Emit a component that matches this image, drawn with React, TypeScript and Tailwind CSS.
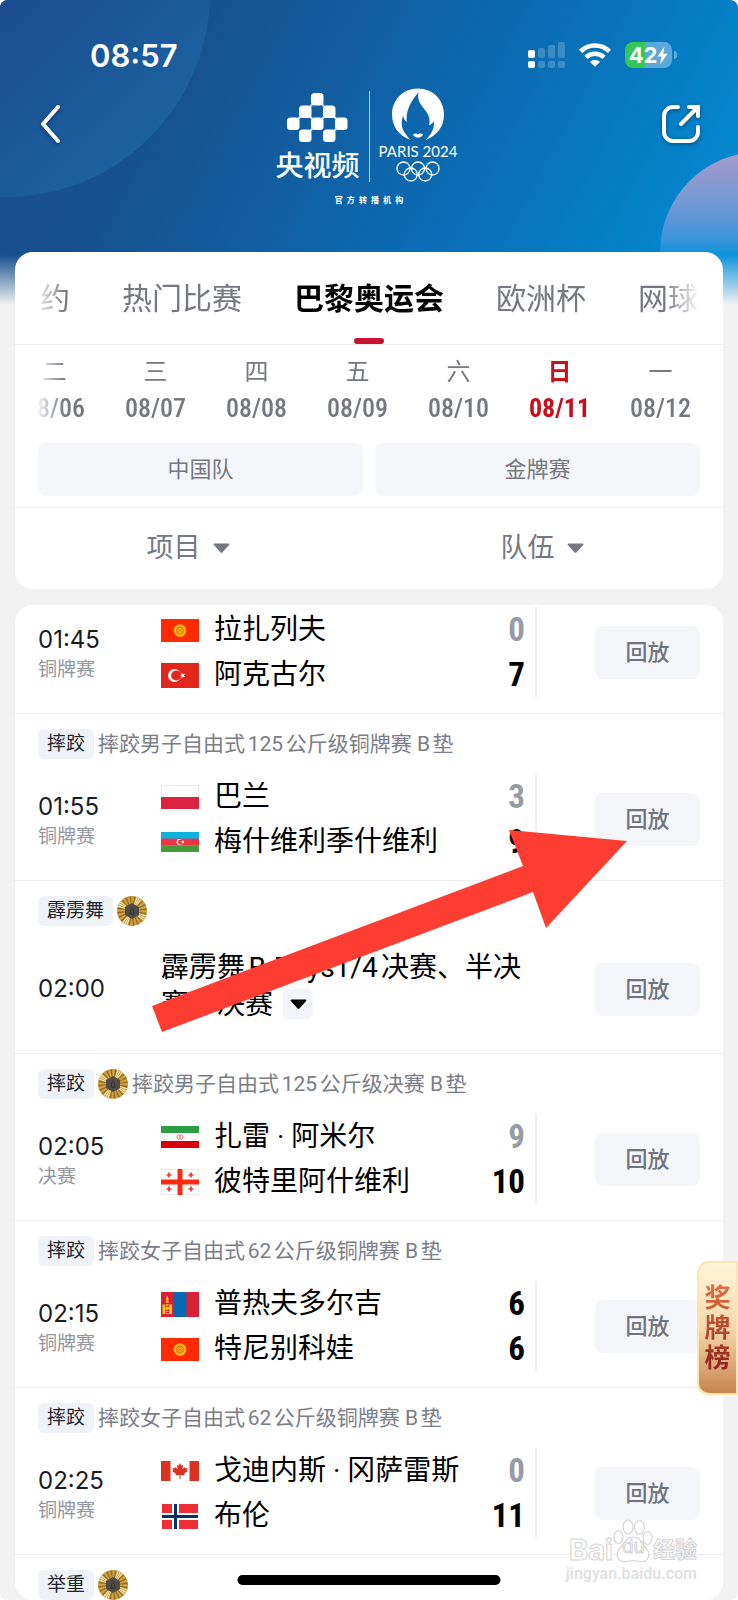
import { useState } from 'react'
import type { ReactNode } from 'react'

type Player = { flag: string; name: string; score: number; lost?: boolean }

type Match = {
  id: number
  sport?: string
  gold?: boolean
  title?: string
  time?: string
  stage?: string
  summary?: string
  players?: Player[]
}

const tabs = ['约', '热门比赛', '巴黎奥运会', '欧洲杯', '网球']

const days = [
  { week: '二', date: '08/06' },
  { week: '三', date: '08/07' },
  { week: '四', date: '08/08' },
  { week: '五', date: '08/09' },
  { week: '六', date: '08/10' },
  { week: '日', date: '08/11' },
  { week: '一', date: '08/12' },
]

const matches: Match[] = [
  {
    id: 1,
    time: '01:45',
    stage: '铜牌赛',
    players: [
      { flag: 'kg', name: '拉扎列夫', score: 0, lost: true },
      { flag: 'tr', name: '阿克古尔', score: 7 },
    ],
  },
  {
    id: 2,
    sport: '摔跤',
    title: '摔跤男子自由式125公斤级铜牌赛 B垫',
    time: '01:55',
    stage: '铜牌赛',
    players: [
      { flag: 'pl', name: '巴兰', score: 3, lost: true },
      { flag: 'az', name: '梅什维利季什维利', score: 9 },
    ],
  },
  {
    id: 3,
    sport: '霹雳舞',
    gold: true,
    time: '02:00',
    summary: '霹雳舞B-Boys1/4决赛、半决赛、决赛',
  },
  {
    id: 4,
    sport: '摔跤',
    gold: true,
    title: '摔跤男子自由式125公斤级决赛 B垫',
    time: '02:05',
    stage: '决赛',
    players: [
      { flag: 'ir', name: '扎雷 · 阿米尔', score: 9, lost: true },
      { flag: 'ge', name: '彼特里阿什维利', score: 10 },
    ],
  },
  {
    id: 5,
    sport: '摔跤',
    title: '摔跤女子自由式62公斤级铜牌赛 B垫',
    time: '02:15',
    stage: '铜牌赛',
    players: [
      { flag: 'mn', name: '普热夫多尔吉', score: 6 },
      { flag: 'kg', name: '特尼别科娃', score: 6 },
    ],
  },
  {
    id: 6,
    sport: '摔跤',
    title: '摔跤女子自由式62公斤级铜牌赛 B垫',
    time: '02:25',
    stage: '铜牌赛',
    players: [
      { flag: 'ca', name: '戈迪内斯 · 冈萨雷斯', score: 0, lost: true },
      { flag: 'no', name: '布伦', score: 11 },
    ],
  },
  { id: 7, sport: '举重', gold: true },
]

const georgiaCrosses = [
  [8, 6],
  [30, 6],
  [8, 20],
  [30, 20],
]

const flags: Record<string, { height: number; art: ReactNode }> = {
  kg: {
    height: 23,
    art: (
      <>
        <rect width="38" height="23" fill="#ff2a00" />
        <circle cx="19" cy="11.5" r="6.3" fill="#fdb813" />
        <circle cx="19" cy="11.5" r="3.4" fill="none" stroke="#e8620c" strokeWidth="1" />
        <path d="M16.5 9.5l5 4M16.5 13.5l5-4" stroke="#e8620c" strokeWidth=".8" />
      </>
    ),
  },
  tr: {
    height: 25,
    art: (
      <>
        <rect width="38" height="25" fill="#e1261c" />
        <circle cx="13.5" cy="12.5" r="6.5" fill="#fff" />
        <circle cx="15.2" cy="12.5" r="5.1" fill="#e1261c" />
        <path d="M18.6 12.5l2-.7V9.600l1.300 1.700 2.100-.6-1.200 1.800 1.200 1.800-2.100-.6-1.300 1.700v-2.200z" fill="#fff" />
      </>
    ),
  },
  pl: {
    height: 24,
    art: (
      <>
        <rect x=".5" y=".5" width="37" height="23" fill="#fff" stroke="#e9e9e9" />
        <path d="M0 12h38v12H0z" fill="#dc2440" />
      </>
    ),
  },
  az: {
    height: 20,
    art: (
      <>
        <rect width="38" height="7" fill="#0bb3df" />
        <rect y="6.6" width="38" height="7" fill="#ef3343" />
        <rect y="13.3" width="38" height="6.7" fill="#469a38" />
        <circle cx="18.5" cy="10" r="3" fill="#fff" />
        <circle cx="19.4" cy="10" r="2.4" fill="#ef3343" />
        <circle cx="21.8" cy="10" r="1.2" fill="#fff" />
      </>
    ),
  },
  ir: {
    height: 22,
    art: (
      <>
        <rect width="38" height="22" fill="#fdfdfd" />
        <rect width="38" height="7" fill="#2b9e44" />
        <rect y="15" width="38" height="7" fill="#d8000a" />
        <path d="M19 8.3v5.4M17.600 8.800c-2.200 1.200-1.900 3.600.3 4.600M20.400 8.800c2.200 1.200 1.900 3.600-.3 4.600" stroke="#e0464c" fill="none" />
      </>
    ),
  },
  ge: {
    height: 26,
    art: (
      <>
        <rect x=".5" y=".5" width="37" height="25" fill="#fff" stroke="#ececec" />
        <path d="M16.5 0h5v26h-5z M0 10.5h38v5H0z" fill="#ff2a10" />
        {georgiaCrosses.map(([x, y]) => (
          <path key={`${x}-${y}`} d={`M${x - 2.5} ${y}h5M${x} ${y - 2.5}v5`} stroke="#ef3a2c" strokeWidth="1.7" />
        ))}
      </>
    ),
  },
  mn: {
    height: 25,
    art: (
      <>
        <rect width="38" height="25" fill="#da2032" />
        <rect x="12.5" width="13" height="25" fill="#0968b5" />
        <path d="M1.5 12.5h2.8V22H1.5zM8.2 12.5H11V22H8.2zM5 12h2.5v1.4H5zM5 19h2.5v1H5zM5 21h2.5v1H5zM6.3 3.5l1 2.2c.8 1.4.3 2.3-1 2.3s-1.800-.9-1-2.300z" fill="#fbc718" />
        <circle cx="6.3" cy="9.6" r="1.5" fill="#fbc718" />
        <circle cx="6.3" cy="16.3" r="1.8" fill="#fbc718" />
      </>
    ),
  },
  ca: {
    height: 20,
    art: (
      <>
        <rect width="38" height="20" fill="#fff" />
        <path d="M0 0h9.500v20H0zM28.500 0H38v20h-9.500z" fill="#dc3224" />
        <path
          d="M19 2l1.500 2.800 1.700-.8-.8 4.200 2.200-2.200.5 1.300 2.400-.4-.8 2.400 1 .6-3.700 3.200.4 1.400-3.900-.6V18h-1v-4.100l-3.900.6.4-1.400-3.700-3.200 1-.6-.8-2.400 2.400.4.500-1.300 2.200 2.200-.8-4.200 1.700.8z"
          fill="#dc3224"
        />
      </>
    ),
  },
  no: {
    height: 25,
    art: (
      <>
        <rect x="1" width="36" height="25" fill="#ee2f35" />
        <path d="M11 0h7v25h-7zM1 9h36v7H1z" fill="#fff" />
        <path d="M13 0h3v25h-3zM1 11h36v3H1z" fill="#07306b" />
      </>
    ),
  },
}

function Flag({ code }: { code: string }) {
  const { height, art } = flags[code]
  return (
    <svg width="38" height={height} viewBox={`0 0 38 ${height}`} className="shrink-0" aria-hidden="true">
      {art}
    </svg>
  )
}

function GoldMedal() {
  const rays = Array.from({ length: 40 }, (_, i) => i)
  return (
    <svg width="30" height="30" viewBox="0 0 30 30" className="shrink-0" role="img" aria-label="金牌">
      <circle cx="15" cy="15" r="15" fill="#c1953b" />
      {rays.map((i) => (
        <path
          key={i}
          d="M15 15L14.300 .5h1.400z"
          fill={i % 10 < 3 ? '#faecbc' : i % 2 ? '#94691d' : '#d0a64a'}
          transform={`rotate(${i * 9 + 20} 15 15)`}
        />
      ))}
      <path d="M15 7l7 4v8l-7 4-7-4v-8z" fill="#504b44" />
      <path d="M15 11v3M13.500 13.500v4.500h3v-4.500M12.500 18h5" stroke="#38342f" fill="none" />
    </svg>
  )
}

function Caret() {
  return (
    <svg width="17" height="10" viewBox="0 0 17 10" aria-hidden="true">
      <path d="M1.500 .5h14c.9 0 1.200.8.6 1.500l-6.500 7.200c-.6.700-1.600.7-2.200 0L.9 2C.3 1.300.6.5 1.500.5z" fill="currentColor" />
    </svg>
  )
}

function StatusBar() {
  return (
    <div className="flex h-[70px] items-end justify-between pr-[61px] pl-[90px]">
      <span className="font-[Inter] text-[31px] leading-[29px] font-semibold">08:57</span>
      <div className="flex h-[30px] items-center gap-[14px]">
        <svg width="37" height="26" viewBox="0 0 37 26" fill="#fff" aria-hidden="true">
          <rect y="8" width="7" height="8" rx="2" />
          <rect y="19" width="7" height="7" rx="2" />
          <g opacity=".2">
            <rect x="10" y="6" width="7" height="10" rx="2" />
            <rect x="20" y="3" width="7" height="13" rx="2" />
            <rect x="30" y="0" width="7" height="16" rx="2" />
            <rect x="10" y="19" width="7" height="7" rx="2" />
            <rect x="20" y="19" width="7" height="7" rx="2" />
            <rect x="30" y="19" width="7" height="7" rx="2" />
          </g>
        </svg>
        <svg width="32" height="24" viewBox="0 0 32 24" fill="none" stroke="#fff" strokeWidth="4.600" aria-hidden="true">
          <path d="M1.600 8.400C9.800.6 22.200.6 30.400 8.400" />
          <path d="M7 14.400c5.200-4.800 12.800-4.800 18 0" />
          <path d="M16 23.700l-5-4.800c2.800-2.500 7.200-2.500 10 0z" fill="#fff" stroke="none" />
        </svg>
        <div className="flex items-center gap-[2px]">
          <div className="flex h-[26px] w-[47px] items-center justify-center overflow-hidden rounded-lg bg-linear-to-r from-[#35c759] from-43% to-white/35 to-43%">
            <span className="font-[Inter] text-[22px] leading-[26px] font-bold">42</span>
            <svg width="11" height="19" viewBox="0 0 11 19" aria-hidden="true">
              <path d="M7.500 .5L.5 10.500h4L3 18.500l7.500-10.800H6.200z" fill="#fff" />
            </svg>
          </div>
          <span className="h-2 w-[3px] rounded-r-full bg-white/35" />
        </div>
      </div>
    </div>
  )
}

function Brand() {
  return (
    <div className="flex flex-col items-center">
      <div className="flex">
        <div className="flex w-[93px] flex-col items-center pt-[5px] pr-[9px]">
          <svg width="61" height="50" viewBox="0 0 61 50" fill="#fff" aria-hidden="true">
            <rect x="24" y="0" width="12.500" height="12.500" rx="3.500" />
            <rect x="12" y="12.500" width="12.500" height="12.500" rx="3.500" />
            <rect x="36" y="12.500" width="12.500" height="12.500" rx="3.500" />
            <rect x="0" y="24.500" width="12.500" height="12.500" rx="3.500" />
            <rect x="24" y="24.500" width="12.500" height="12.500" rx="3.500" />
            <rect x="48" y="24.500" width="12.500" height="12.500" rx="3.500" />
            <rect x="12" y="36.500" width="12.500" height="12.500" rx="3.500" />
            <rect x="36" y="36.500" width="12.500" height="12.500" rx="3.500" />
            <path d="M23.300 11.500h2v2h-2zM35.300 11.500h2v2h-2zM11.300 23.700h2v2h-2zM23.300 23.700h2v2h-2zM35.300 23.700h2v2h-2zM47.300 23.700h2v2h-2zM23.300 35.700h2v2h-2zM47.300 35.700h2v2h-2z" />
          </svg>
          <span className="mt-[7px] text-[28px] leading-[34px] font-medium whitespace-nowrap">央视频</span>
        </div>
        <div className="mt-[3px] h-[91px] w-px bg-white/70" />
        <div className="flex w-[93px] flex-col items-center pl-1">
          <svg width="54" height="53" viewBox="0 0 52 52" aria-hidden="true">
            <path
              d="M26 .5C11.500 .5.500 11.500.500 26c0 11.500 6.500 20.500 18 25-4-5.500-8.500-9-8.500-16.500 0-2.500.5-5 1.500-7 .5 3 1.500 4.500 3.500 5.800C14 24 17.500 14.500 26.500 4.500c-1.500 8 2 11.500 6 16.500 4.500 5.500 5.500 9 4.500 15.500 2.500-1 3.800-2.300 4.300-4.300 1.500 7.500-2.300 13.300-7.800 18.800 11.500-4.500 18-13.500 18-25C51.500 11.500 40.500.5 26 .5z"
              fill="#fff"
            />
            <path d="M21 45.500c2 -1 3.500-1 5 0 1.500-1 3-1 5 0-1.500 2.500-3 3-5 3s-3.500-.5-5-3z" fill="#fff" />
          </svg>
          <span className="mt-[2px] font-[Lato] text-[15px] leading-[16px] whitespace-nowrap">PARIS 2024</span>
          <svg width="44" height="21" viewBox="0 0 44 21" fill="none" stroke="#fff" strokeWidth="1.300" className="mt-[2px]" aria-hidden="true">
            <circle cx="7.500" cy="7.500" r="6.500" />
            <circle cx="22" cy="7.500" r="6.500" />
            <circle cx="36.500" cy="7.500" r="6.500" />
            <circle cx="14.800" cy="13.500" r="6.500" />
            <circle cx="29.200" cy="13.500" r="6.500" />
          </svg>
        </div>
      </div>
      <span className="mt-[11px] text-[8px] leading-[12px] font-bold whitespace-nowrap">官&ensp;方&ensp;转&ensp;播&ensp;机&ensp;构</span>
    </div>
  )
}

function MatchRow({ match }: { match: Match }) {
  const { sport, gold, title, time, stage, summary, players } = match
  return (
    <li className={`border-b border-[#ededef] px-[23px] pb-4 ${sport ? 'pt-[15px]' : 'pt-[2px]'}`}>
      {sport && (
        <div className="mb-[15px] flex h-[30px] items-center gap-1">
          <span className="rounded-md bg-[#eff2f7] px-[9px] text-[19px] leading-[30px] text-[#22242c]">{sport}</span>
          {gold && <GoldMedal />}
          {title && <span className="text-[21px] leading-[30px] text-[#7b7d87]">{title}</span>}
        </div>
      )}
      {time && (
        <div className={`flex items-center ${summary ? 'h-24' : 'h-[90px]'}`}>
          <div className={`w-[123px] shrink-0 ${stage ? 'pt-[6px]' : ''}`}>
            <p className="font-[Inter] text-[24px] leading-[30px] text-[#1a1c24]">{time}</p>
            {stage && <p className="text-[19px] leading-[30px] text-[#94969f]">{stage}</p>}
          </div>
          {players && (
            <div className="min-w-0 flex-1 border-r-2 border-[#edf0f4] pr-[10px]">
              {players.map((p) => (
                <div key={p.name} className="flex h-[45px] items-center gap-[15px] pt-px">
                  <Flag code={p.flag} />
                  <span className="flex-1 text-[28px] leading-[44px] whitespace-nowrap text-black">{p.name}</span>
                  <span
                    className={`font-['Roboto_Condensed',Roboto,sans-serif] text-[33px] leading-[44px] font-bold ${p.lost ? 'text-[#979ba3]' : 'text-black'}`}
                  >
                    {p.score}
                  </span>
                </div>
              ))}
            </div>
          )}
          {summary && (
            <div className="min-w-0 flex-1 pb-[6px]">
              <p className="text-[28px] leading-[37px] text-black">
                {summary}
                <button type="button" aria-label="展开" className="mb-1 ml-[10px] inline-flex h-[30px] w-[30px] items-center justify-center rounded-md bg-[#f4f5fa] align-middle">
                  <Caret />
                </button>
              </p>
            </div>
          )}
          <button
            type="button"
            className={`h-[53px] w-[105px] shrink-0 rounded-lg bg-[#f4f6fa] text-[22px] font-medium text-[#71747f] ${summary ? 'ml-[60px]' : 'ml-[58px]'}`}
          >
            回放
          </button>
        </div>
      )}
    </li>
  )
}

function Watermark() {
  return (
    <div className="pointer-events-none absolute right-[41px] bottom-[15px] flex flex-col items-end">
      <div className="flex items-end text-white [-webkit-text-stroke:1px_#d4d4d6]">
        <span className="font-[Inter] text-[29px] leading-[26px] font-bold">Bai</span>
        <div className="relative">
          <svg width="40" height="44" viewBox="0 0 40 44" fill="#fff" stroke="#d4d4d6" strokeWidth="1.200" aria-hidden="true">
            <ellipse cx="5.500" cy="18" rx="4.500" ry="6.500" />
            <ellipse cx="15" cy="8" rx="5" ry="7" />
            <ellipse cx="26.500" cy="8.500" rx="5" ry="7" />
            <ellipse cx="34.500" cy="19" rx="4.500" ry="6.500" />
            <path d="M20 18c7 0 8 6 13 11 5 6 3 14-5 13.500-4-.3-6-.8-8-.8s-4 .5-8 .8C4 43 2 35 7 29c5-5 6-11 13-11z" />
          </svg>
          <span className="absolute bottom-1 left-[9px] font-[Inter] text-[19px] leading-[24px]">du</span>
        </div>
        <span className="text-[22px] leading-[26px] font-bold">经验</span>
      </div>
      <span className="font-[Roboto] text-[16px] leading-[22px] font-medium text-[#e0e0e1]">jingyan.baidu.com</span>
    </div>
  )
}

export default function App() {
  const [activeTab, setActiveTab] = useState('巴黎奥运会')
  const [activeDate, setActiveDate] = useState('08/11')

  return (
    <div className="relative flex h-screen flex-col overflow-hidden rounded-[8px] bg-[#f2f2f2] font-[Roboto,'Noto_Sans_CJK_SC',sans-serif] [text-autospace:normal]">
      <div className="absolute inset-x-0 top-0 h-[305px] overflow-hidden bg-linear-[118deg,#1b4c8f,#17518f_24%,#0c69b0_58%,#0288d0_92%]">
        <div className="absolute -top-[212px] -left-[210px] h-[409px] w-[420px] rounded-full bg-linear-to-br from-[#1b4c8f] from-50% to-[#1c69a6]" />
        <div className="absolute top-[152px] -right-[122px] h-[200px] w-[200px] rounded-full bg-linear-to-b from-[#a79acb] to-[#0f93dc] to-50%" />
        <div className="absolute inset-x-0 bottom-0 h-[50px] bg-linear-to-b from-transparent to-[#f2f2f2]" />
      </div>

      <header className="relative h-[252px] shrink-0 text-white">
        <StatusBar />
        <div className="mt-[18px] flex items-start justify-between px-[37px]">
          <button type="button" aria-label="返回" className="mt-[16px] w-10 drop-shadow-[0_1px_2px_rgba(0,0,0,0.4)]">
            <svg width="26" height="40" viewBox="0 0 26 40" fill="none" stroke="#fff" strokeWidth="4" strokeLinecap="round" strokeLinejoin="round">
              <path d="M21 3L6 20l15 17" />
            </svg>
          </button>
          <Brand />
          <button type="button" aria-label="分享" className="mt-[16px] drop-shadow-[0_1px_2px_rgba(0,0,0,0.4)]">
            <svg width="40" height="40" viewBox="0 0 40 40" fill="none" stroke="#fff" strokeWidth="4" strokeLinecap="round" strokeLinejoin="miter">
              <path d="M17 3h-5a9 9 0 0 0-9 9v16a9 9 0 0 0 9 9h16a9 9 0 0 0 9-9v-5" />
              <path d="M20 20L36 4M28 3h9v9" />
            </svg>
          </button>
        </div>
      </header>

      <section className="relative mx-[15px] shrink-0 rounded-[18px] bg-white text-[#757781]">
        <nav className="flex h-[93px] justify-center gap-[52px] overflow-hidden border-b border-[#ededef] px-[23px] [mask-image:linear-gradient(to_right,transparent_20px,#000_50px,#000_calc(100%-60px),transparent_calc(100%-22px)),linear-gradient(#000,#000)] [mask-position:0_0,0_100%] [mask-repeat:no-repeat] [mask-size:100%_92px,100%_1px]">
          {tabs.map((tab) => (
            <button
              key={tab}
              type="button"
              onClick={() => setActiveTab(tab)}
              className={`relative h-full shrink-0 text-[30px] whitespace-nowrap ${tab === activeTab ? 'font-bold text-black' : ''}`}
            >
              {tab}
              {tab === activeTab && (
                <span className="absolute bottom-0 left-1/2 h-[6px] w-[30px] -translate-x-1/2 rounded-[3px] bg-[#c4122f]" />
              )}
            </button>
          ))}
        </nav>

        <div className="flex justify-end overflow-hidden pt-[9px] pr-[12px] pb-[17px] [mask-image:linear-gradient(to_right,transparent_20px,#000_50px)]">
          {days.map((d) => (
            <button
              key={d.date}
              type="button"
              onClick={() => setActiveDate(d.date)}
              className={`flex w-[101px] shrink-0 flex-col items-center ${d.date === activeDate ? 'font-bold text-[#c80f1c]' : ''}`}
            >
              <span className="text-[24px] leading-[36px]">{d.week}</span>
              <span
                className={`font-['Roboto_Condensed',Roboto,sans-serif] text-[26px] leading-[36px] ${d.date === activeDate ? 'font-bold' : 'font-medium'}`}
              >
                {d.date}
              </span>
            </button>
          ))}
        </div>

        <div className="grid grid-cols-2 gap-3 px-[23px] pb-[11px]">
          <button type="button" className="h-[53px] rounded-lg bg-[#f4f6fa] text-[22px]">
            中国队
          </button>
          <button type="button" className="h-[53px] rounded-lg bg-[#f4f6fa] text-[22px]">
            金牌赛
          </button>
        </div>

        <div className="grid h-[82px] grid-cols-2 border-t border-[#ededef] pb-[2px]">
          {['项目', '队伍'].map((label) => (
            <label key={label} className="flex items-center justify-center gap-3 pr-2">
              <select aria-label={label} className="appearance-none bg-transparent text-[27px] leading-[40px]">
                <option>{label}</option>
              </select>
              <Caret />
            </label>
          ))}
        </div>
      </section>

      <ul className="relative mx-[15px] mt-4 min-h-0 flex-1 overflow-hidden rounded-[18px] bg-white">
        {matches.map((m) => (
          <MatchRow key={m.id} match={m} />
        ))}
      </ul>

      <a
        href="#medals"
        className="absolute top-[1261px] right-0 flex h-[134px] w-[41px] items-center justify-center rounded-l-[12px] border-2 border-[#fbe6ab] bg-linear-to-b from-[#fff5da] via-[#f6d9ab] to-[#c78550]"
      >
        <span className="w-[26px] bg-linear-to-b from-[#e3713f] to-[#8e1c1c] bg-clip-text text-[26px] leading-[30px] font-bold text-transparent">奖牌榜</span>
      </a>

      <svg width="475" height="203" viewBox="0 0 475 203" className="pointer-events-none absolute top-[830px] left-[152px]" aria-hidden="true">
        <path d="M357 0L475 11 394 98 381 62 10 202 0 176 371 36z" fill="#fd3c32" />
      </svg>

      <Watermark />
      <div className="absolute bottom-[15px] left-1/2 h-[10px] w-[263px] -translate-x-1/2 rounded-full bg-black" />
    </div>
  )
}
